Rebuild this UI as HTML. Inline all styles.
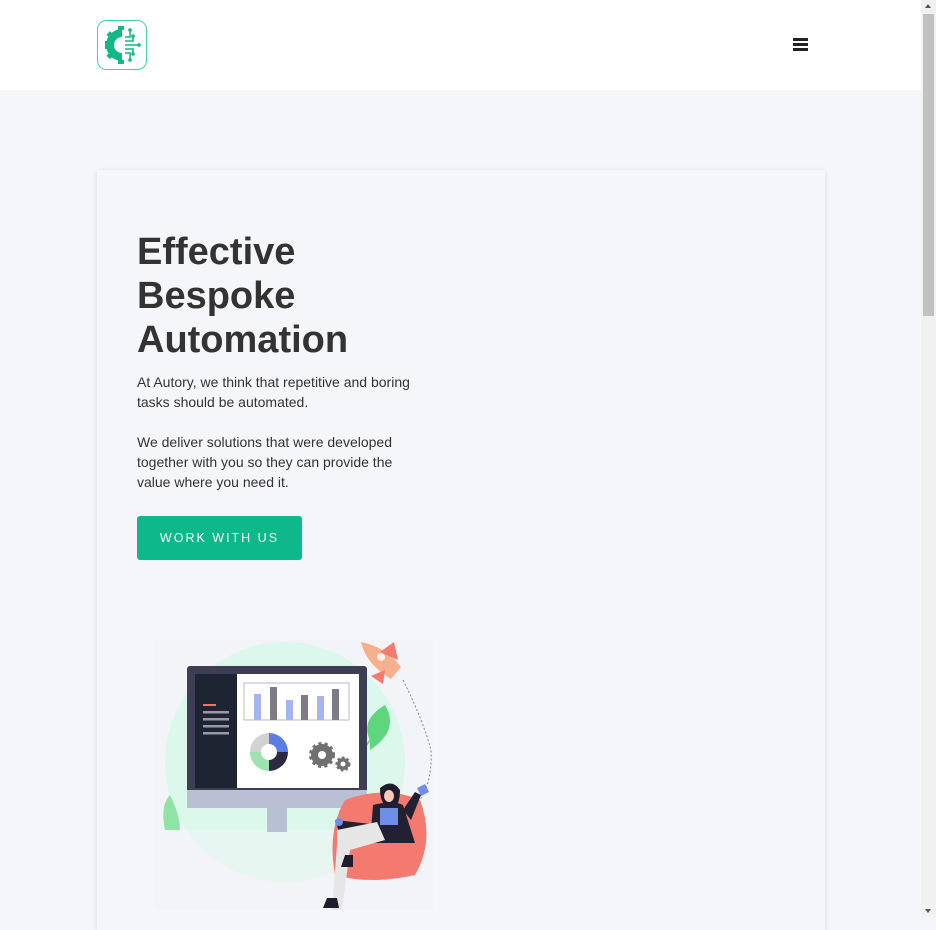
<!DOCTYPE html>
<html><head><meta charset="utf-8"><style>
*{margin:0;padding:0;box-sizing:border-box}
body{width:936px;height:917px;overflow:hidden;background:#f5f6fa;font-family:"Liberation Sans",sans-serif;position:relative}
.hdr{position:absolute;left:0;top:0;width:921px;height:90px;background:#fff}
.sb{position:absolute;right:0;top:0;width:15px;height:917px;background:#f1f1f1}
.sb .th{position:absolute;left:2px;top:14px;width:11px;height:302px;background:#c1c1c1}
.card{position:absolute;left:97px;top:170px;width:728px;height:760px;background:#f5f6fa;box-shadow:0 1px 5px rgba(0,0,0,.12)}
h1{position:absolute;left:137px;top:230px;font-size:38px;line-height:44px;color:#333;font-weight:bold}
p{position:absolute;left:137px;font-size:14px;line-height:20px;color:#333;width:290px}
.btn{position:absolute;left:137px;top:516px;width:165px;height:44px;background:#0db88a;color:#fff;font-size:12.5px;letter-spacing:2px;text-align:center;line-height:44px;border-radius:3px}
</style></head><body>
<div class="hdr">
<svg style="position:absolute;left:97px;top:20px" width="50" height="50" viewBox="0 0 50 50">
<rect x="0.5" y="0.5" width="49" height="49" rx="9" fill="#fff" stroke="#3fd3b5"/>
<path d="M25 9 a16 16 0 1 0 0 32 v-8 a8 8 0 1 1 0-16z" fill="#12b886"/>
<g fill="#12b886"><rect x="8" y="21" width="4" height="8"/><rect x="11" y="12" width="5" height="5" transform="rotate(45 13 14)"/><rect x="11" y="33" width="5" height="5" transform="rotate(45 13 35)"/><rect x="21" y="6" width="6" height="4"/><rect x="21" y="40" width="6" height="4"/></g>
<g stroke="#12b886" stroke-width="1.6" fill="none"><path d="M28 17h5v-7M28 21h8v-5M28 25h14M28 29h8v5M28 33h5v7"/></g>
<g fill="#12b886"><circle cx="33" cy="10" r="1.8"/><circle cx="36" cy="16" r="1.8"/><circle cx="42" cy="25" r="1.8"/><circle cx="36" cy="34" r="1.8"/><circle cx="33" cy="40" r="1.8"/></g>
</svg>
<div style="position:absolute;left:793px;top:38px;width:15px;height:2.5px;background:#222;box-shadow:0 5px 0 #222,0 10px 0 #222"></div>
</div>
<div class="sb"><div class="th"></div>
<div style="position:absolute;left:4px;top:4px;border-left:3.5px solid transparent;border-right:3.5px solid transparent;border-bottom:4px solid #555"></div>
<div style="position:absolute;left:4px;bottom:4px;border-left:3.5px solid transparent;border-right:3.5px solid transparent;border-top:4px solid #555"></div></div>
<div class="card"></div>
<h1>Effective<br>Bespoke<br>Automation</h1>
<p style="top:372px">At Autory, we think that repetitive and boring tasks should be automated.</p>
<p style="top:432px">We deliver solutions that were developed together with you so they can provide the value where you need it.</p>
<div class="btn">WORK WITH US</div>
<svg style="position:absolute;left:155px;top:640px" width="278" height="270" viewBox="0 0 278 270">
<rect width="278" height="270" fill="#f3f4f8"/>
<circle cx="130" cy="122" r="120" fill="#dcf8ec"/>
<rect x="0" y="190" width="278" height="80" fill="#f3f4f8" opacity=".45"/>
<path d="M10 190 q-5-25 5-35 q10 20 10 35z" fill="#8ee3a5"/>
<path d="M205 140 q-5-20 10-40" stroke="#5fd67e" stroke-width="1.5" fill="none"/>
<path d="M215 100 q-10-20 15-35 q15 25-15 45z" fill="#5fd67e"/>
<path d="M212 118 q-10-18-30-22 q5 22 30 24z" fill="#b6eec6"/>
<rect x="32" y="26" width="180" height="140" rx="3" fill="#3f3d56"/>
<rect x="40" y="34" width="42" height="114" fill="#1f2433"/>
<rect x="82" y="34" width="122" height="114" fill="#fff"/>
<rect x="32" y="150" width="180" height="18" fill="#b9c0d4"/>
<rect x="112" y="168" width="20" height="24" fill="#b9c0d4"/>
<rect x="48" y="64" width="13" height="2" fill="#f07468"/>
<g fill="#9a9aa5"><rect x="48" y="71" width="26" height="2.5"/><rect x="48" y="78" width="26" height="2.5"/><rect x="48" y="85" width="26" height="2.5"/><rect x="48" y="92" width="26" height="2.5"/></g>
<rect x="89" y="43" width="105" height="37" fill="none" stroke="#bbb"/>
<g><rect x="99" y="54" width="7" height="26" fill="#a6b4f0"/><rect x="115" y="47" width="7" height="33" fill="#7d7b85"/><rect x="131" y="60" width="7" height="20" fill="#a6b4f0"/><rect x="146" y="55" width="7" height="25" fill="#7d7b85"/><rect x="162" y="56" width="7" height="24" fill="#a6b4f0"/><rect x="177" y="49" width="7" height="31" fill="#7d7b85"/></g>
<circle cx="114" cy="112" r="19" fill="#d2d2d2"/><path d="M114 112 L114 93 A19 19 0 0 1 133 112z" fill="#5b7ee5"/><path d="M114 112 L133 112 A19 19 0 0 1 114 131z" fill="#2e2b40"/><path d="M114 112 L114 131 A19 19 0 0 1 95 112z" fill="#9de3b0"/><circle cx="114" cy="112" r="8" fill="#fff"/>
<circle cx="167" cy="115" r="11" fill="#707070" stroke="#707070" stroke-width="4" stroke-dasharray="3 3"/><circle cx="167" cy="115" r="4" fill="#fff"/>
<circle cx="188" cy="124" r="6" fill="#707070" stroke="#707070" stroke-width="3" stroke-dasharray="2.5 2"/><circle cx="188" cy="124" r="2.5" fill="#fff"/>
<path d="M206 2 q25 5 40 25 l-10 12 q-25-15-30-37z" fill="#f7b08e"/>
<path d="M225 12 l14-10 l4 18z M230 30 l-14 6 l12 8z" fill="#f47a6f"/>
<circle cx="226" cy="17" r="4" fill="#fff" opacity=".8"/>
<path d="M248 40 q20 40 28 70 q2 40-20 60" stroke="#889" stroke-dasharray="2 2" fill="none"/>
<path d="M190 160 q40-15 75 0 q15 40-5 75 q-45 10-80 0 q-8-45 10-75z" fill="#f47a6f"/>
<path d="M225 148 q12-10 20 2 q0 12 -5 18 q-15 2 -15-20z" fill="#1f1d2b"/>
<ellipse cx="234" cy="156" rx="5" ry="6" fill="#f9c9c0"/>
<path d="M218 165 q20-5 30 0 l12 38 h-45z" fill="#222031"/>
<path d="M262 148 l8-4 l4 8 l-8 4z" fill="#6f8ee8"/>
<path d="M248 170 l12-18 l6 3 l-10 25z" fill="#222031"/>
<rect x="225" y="168" width="18" height="17" fill="#6f8ee8"/>
<path d="M180 180 l45 5 l-5 10 h-35z" fill="#222031"/>
<path d="M182 190 l40-8 l8 18 l-35 10 l-8 60 h-10 l5-65z" fill="#e6e6e6"/>
<circle cx="184" cy="182" r="4" fill="#6f8ee8"/>
<path d="M172 258 h10 l2 10 h-16z" fill="#1f1d2b"/><path d="M190 215 h8 v12 h-12z" fill="#1f1d2b"/>
</svg>
</body></html>
